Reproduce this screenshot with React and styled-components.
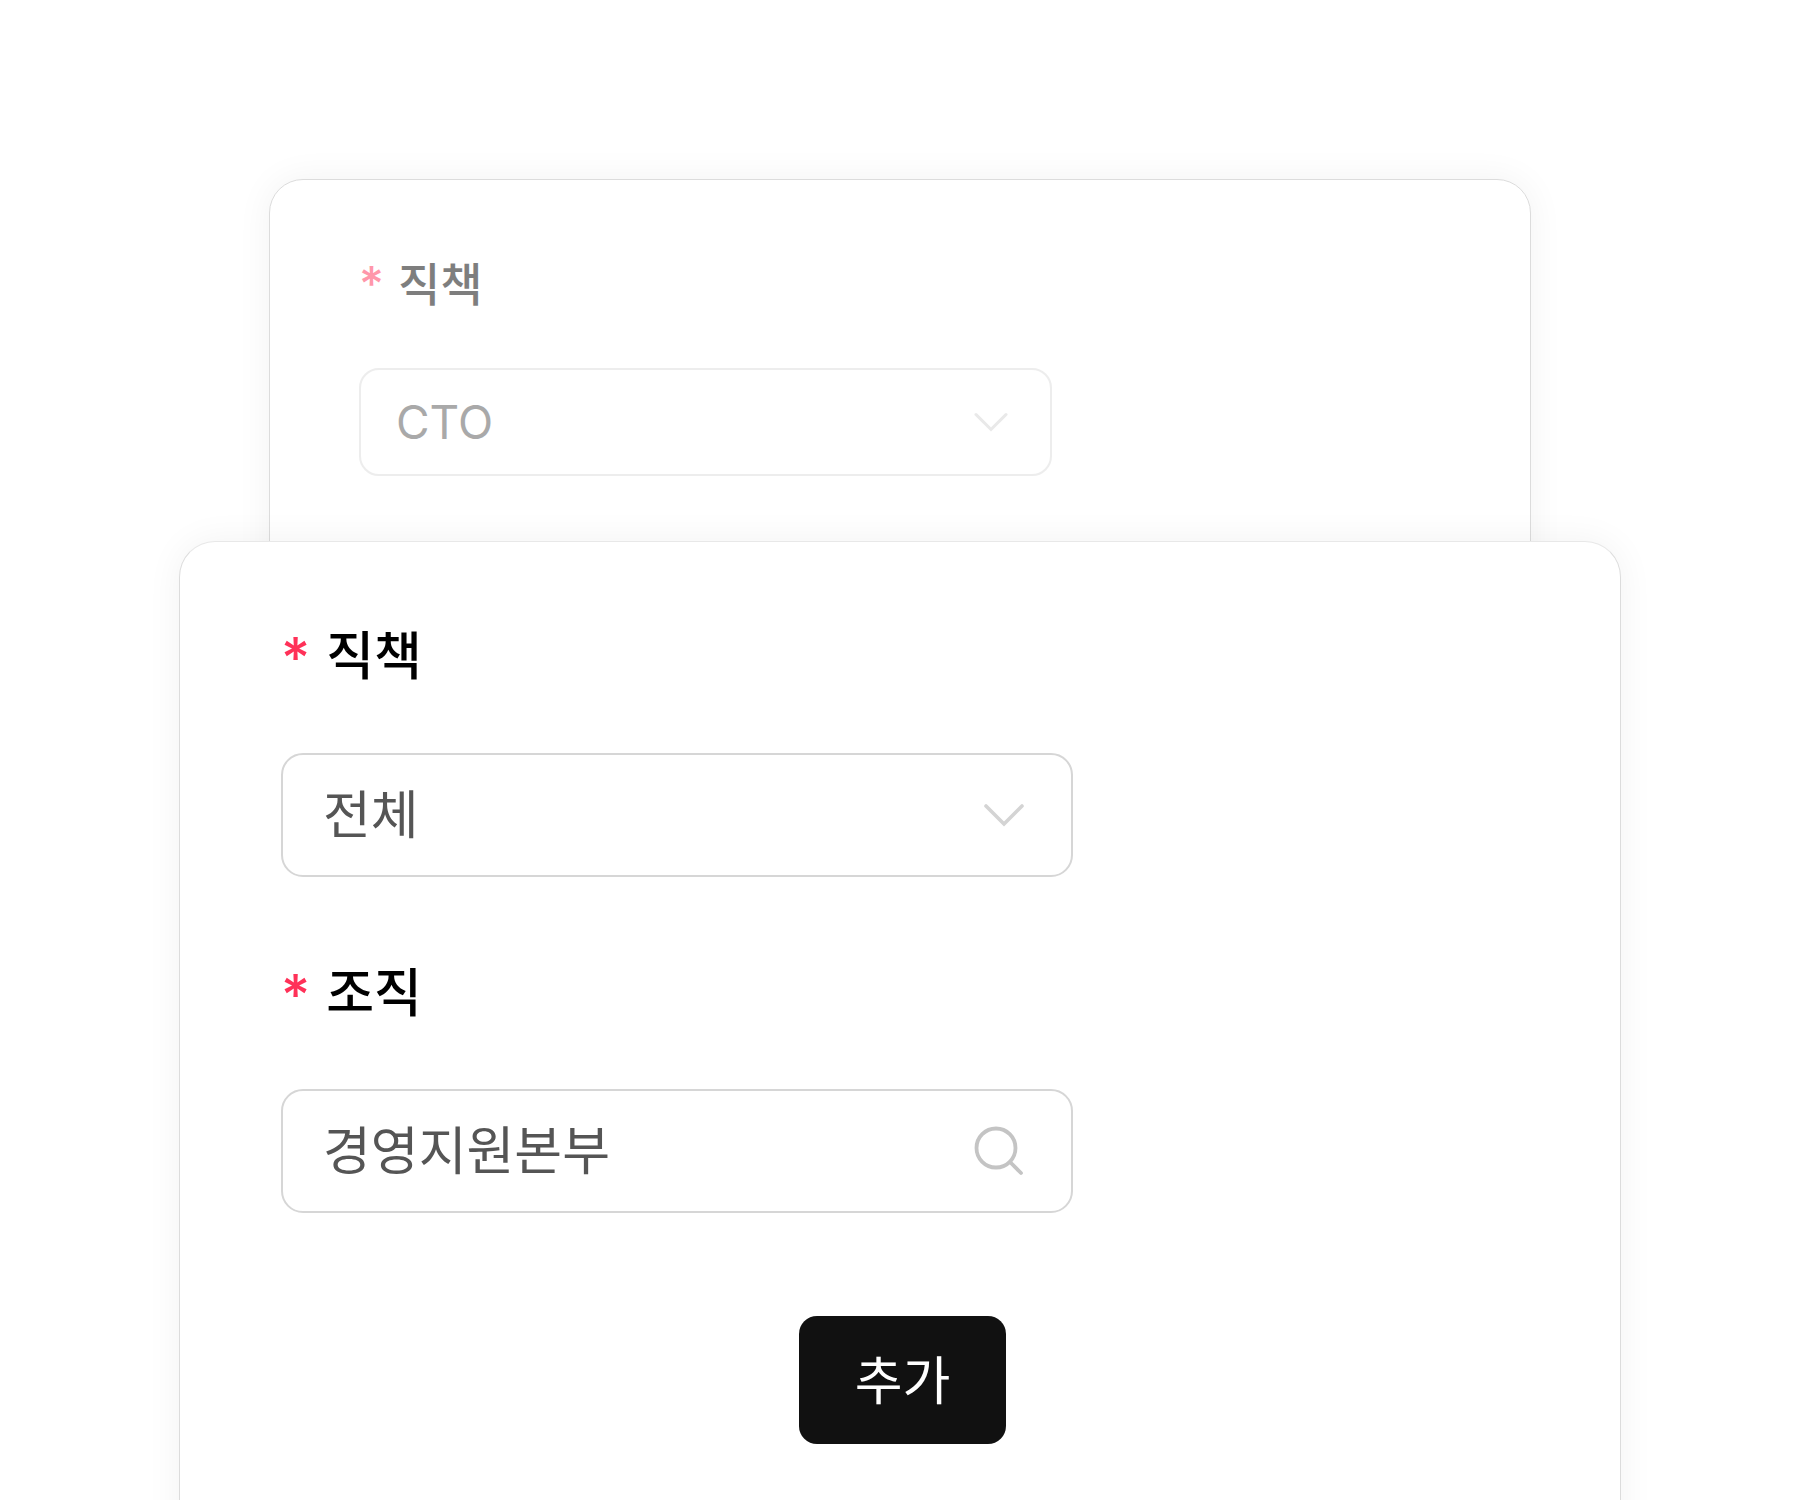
import React from "react";
import styled, { createGlobalStyle } from "styled-components";

const Global = createGlobalStyle`
  html, body { margin: 0; padding: 0; background: #fff; }
  body { font-family: Inter, "Noto Sans CJK KR", sans-serif; }
`;

const Page = styled.div`
  width: 1800px;
  height: 1500px;
  overflow: hidden;
  padding-top: 179px;
  box-sizing: border-box;
  background: #fff;
`;

const Card = styled.section`
  box-sizing: border-box;
  background: #fff;
  border: 1px solid #dcdcdc;
  box-shadow: 0 0 36px rgba(0, 0, 0, 0.055);
  display: flex;
  flex-direction: column;
`;

const BackCard = styled(Card)`
  width: 1262px;
  height: 420px;
  margin-left: 269px;
  border-radius: 34px;
  padding: 77px 0 0 89px;
`;

const FrontCard = styled(Card)`
  position: relative;
  width: 1442px;
  height: 1100px;
  margin: -58px 0 0 179px;
  border-radius: 36px;
  border-top-color: #e8e8e8;
  padding: 84px 0 0 101px;
`;

const Faded = styled.div`
  opacity: 0.5;
  display: flex;
  flex-direction: column;
`;

const Label = styled.div`
  display: flex;
  align-items: center;
  gap: ${p => (p.$small ? 14 : 16)}px;
  height: ${p => (p.$small ? 48 : 54)}px;
  font-family: "Noto Sans CJK KR", sans-serif;
  font-size: ${p => (p.$small ? 46 : 52)}px;
  font-weight: 500;
  line-height: 1;
  color: #000;
`;

const Star = styled.span`
  color: #ff3158;
  font-family: Inter, sans-serif;
  font-size: ${p => (p.$small ? 48 : 56)}px;
  font-weight: 500;
  line-height: 1;
  height: ${p => (p.$small ? 42 : 46)}px;
`;

const Field = styled.div`
  box-sizing: border-box;
  display: flex;
  align-items: center;
  justify-content: space-between;
  background: #fff;
  border: 2px solid ${p => (p.$small ? "#dcdcdc" : "#d6d6d6")};
  border-radius: ${p => (p.$small ? 20 : 22)}px;
  width: ${p => (p.$small ? 693 : 792)}px;
  height: ${p => (p.$small ? 108 : 124)}px;
  padding: ${p => (p.$small ? "0 42px 0 35px" : "0 47px 0 40px")};
  margin-top: ${p => (p.$small ? 63 : 73)}px;
  color: #555;
  font-size: ${p => (p.$small ? 46 : 52)}px;
  font-family: Inter, "Noto Sans CJK KR", sans-serif;
`;

const Value = styled.span`
  line-height: 1;
  padding-bottom: ${p => (p.$small ? 1 : 0)}px;
  padding-top: ${p => (p.$small ? 0 : 1)}px;
`;

const SearchField = styled(Field)`
  padding-right: 47px;
  margin-top: 72px;
`;

const NextLabel = styled(Label)`
  margin-top: 86px;
`;

const Actions = styled.div`
  display: flex;
  justify-content: center;
  padding-right: 96px;
  margin-top: 103px;
`;

const AddButton = styled.button`
  width: 207px;
  height: 128px;
  border: 0;
  border-radius: 18px;
  background: #111;
  color: #fff;
  font-family: "Noto Sans CJK KR", sans-serif;
  font-size: 52px;
  font-weight: 400;
  padding: 0 0 6px;
`;

const Chevron = ({ small }) => (
  <svg width={small ? 34 : 40} height={small ? 20 : 24} viewBox="0 0 40 24" fill="none" stroke="#d4d4d4" strokeWidth="3.6" strokeLinecap="round">
    <path d="M2 3 L20 21 L38 3" />
  </svg>
);

const SearchIcon = () => (
  <svg width="50" height="50" viewBox="0 0 50 50" fill="none" stroke="#c4c4c4" strokeWidth="3.8">
    <circle cx="22" cy="22" r="19.5" />
    <path d="M36 36 L47 47" strokeLinecap="round" />
  </svg>
);

export default function App() {
  return (
    <>
      <Global />
      <Page>
        <BackCard>
          <Faded>
            <Label $small>
              <Star $small>*</Star>
              직책
            </Label>
            <Field $small>
              <Value $small>CTO</Value>
              <Chevron small />
            </Field>
          </Faded>
        </BackCard>
        <FrontCard>
          <Label>
            <Star>*</Star>
            직책
          </Label>
          <Field>
            <Value>전체</Value>
            <Chevron />
          </Field>
          <NextLabel>
            <Star>*</Star>
            조직
          </NextLabel>
          <SearchField>
            <Value>경영지원본부</Value>
            <SearchIcon />
          </SearchField>
          <Actions>
            <AddButton>추가</AddButton>
          </Actions>
        </FrontCard>
      </Page>
    </>
  );
}
